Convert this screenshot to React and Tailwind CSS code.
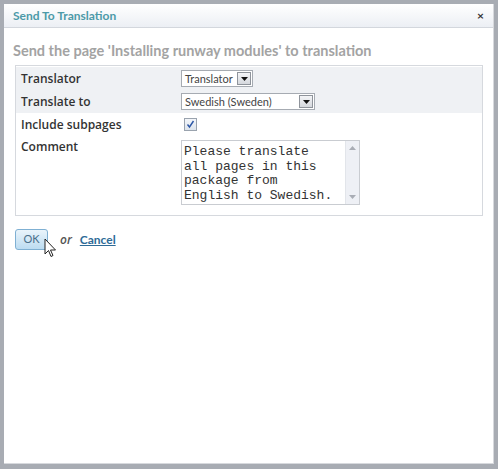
import React from "react";

const SANS = { fontFamily: 'Lato, "Open Sans", sans-serif' };
const LABEL = { fontFamily: '"Open Sans", Lato, sans-serif' };

function DropButton() {
  return (
    <span className="flex items-center justify-center w-[14px] h-[13px] border border-[#8f949b] bg-gradient-to-b from-[#f4f5f7] to-[#d5d8dd]">
      <svg width="7" height="4" viewBox="0 0 7 4">
        <path d="M0 0h7L3.5 4z" fill="#111" />
      </svg>
    </span>
  );
}

function Select({ value, width }) {
  return (
    <div
      className={`flex items-center justify-between h-[17px] border border-[#a6abb2] bg-white pl-[3px] pr-[1px] ${width}`}
    >
      <span className="text-[11px] text-[#444] leading-none">{value}</span>
      <DropButton />
    </div>
  );
}

function Row({ label, bg, align = "items-center", h = "h-[23px]", pt = "", children }) {
  return (
    <div className={`flex ${align} ${h} ${bg}`}>
      <div className={`w-[165px] pl-[5px] text-[12px] leading-[18px] font-semibold text-[#333] ${pt}`} style={LABEL}>
        {label}
      </div>
      <div className="flex-1">{children}</div>
    </div>
  );
}

export default function App() {
  return (
    <div className="w-[498px] h-[469px] bg-[#a8acb3] pt-[4px] pl-[4px] pr-[4px] pb-[5px]" style={SANS}>
      <div className="relative h-full bg-white border-r border-b border-[#d7d9dd] flex flex-col">
        <div className="flex items-center justify-between h-[24px] px-[9px] bg-gradient-to-b from-white to-[#eceff4] border-b border-[#d3d7dd]">
          <span className="text-[12px] font-bold text-[#4c9aa8]">Send To Translation</span>
          <span className="text-[12px] font-bold text-[#333] leading-none">×</span>
        </div>

        <div className="pl-[9px] pt-[14px] text-[14.5px] leading-[18px] font-bold text-[#a3a3a3]">
          Send the page 'Installing runway modules' to translation
        </div>

        <div className="ml-[11px] mr-[10px] mt-[5px] border border-[#d6d9de] pt-[1px] pb-[9px]">
          <Row label="Translator" bg="bg-[#eff1f4]">
            <Select value="Translator" width="w-[72px]" />
          </Row>
          <Row label="Translate to" bg="bg-[#eff1f4]">
            <Select value="Swedish (Sweden)" width="w-[134px]" />
          </Row>
          <Row label="Include subpages" bg="bg-white">
            <div className="ml-[3px] w-[13px] h-[13px] border border-[#9aa3ae] bg-gradient-to-b from-[#f3f6fa] to-[#dde4ec] flex items-center justify-center">
              <svg width="9" height="9" viewBox="0 0 9 9">
                <path d="M1.5 4.5l2 2.5 4-6" stroke="#2b56a6" strokeWidth="1.4" fill="none" />
              </svg>
            </div>
          </Row>
          <Row label="Comment" bg="bg-white" align="items-start" h="h-[70px]" pt="pt-[2px]">
            <div className="mt-[4px] flex w-[179px] h-[65px] border border-[#c9ccd1] bg-white">
              <div
                className="flex-1 pl-[2px] pt-[4px] text-[13px] leading-[14.5px] text-[#333]"
                style={{ fontFamily: '"Liberation Mono", monospace' }}
              >
                Please translate
                <br />
                all pages in this
                <br />
                package from
                <br />
                English to Swedish.
              </div>
              <div className="w-[14px] bg-[#eef0f5] border-l border-[#e2e5ea] flex flex-col justify-between items-center py-[5px]">
                <svg width="7" height="4" viewBox="0 0 7 4">
                  <path d="M0 4h7L3.5 0z" fill="#a9adb5" />
                </svg>
                <svg width="7" height="4" viewBox="0 0 7 4">
                  <path d="M0 0h7L3.5 4z" fill="#a9adb5" />
                </svg>
              </div>
            </div>
          </Row>
        </div>

        <div className="flex items-center ml-[11px] mt-[13px]">
          <button className="relative w-[33px] h-[21px] rounded-[3px] border border-[#7fb0d3] bg-gradient-to-b from-[#eaf4fb] to-[#bcdcf1] text-[11px] text-[#4a6f8a]">
            OK
            <svg className="absolute left-[28px] top-[8px]" width="13" height="21" viewBox="0 0 13 21">
              <path
                d="M1 1v15l3.5-3.5 2.5 6 2-1-2.5-5.5h5z"
                fill="white"
                stroke="#222"
                strokeWidth="1"
                strokeLinejoin="round"
              />
            </svg>
          </button>
          <span className="ml-[12px] text-[12px] italic font-semibold text-[#555]" style={LABEL}>
            or
          </span>
          <a className="ml-[8px] text-[12px] font-bold text-[#2e6b97] underline">Cancel</a>
        </div>
      </div>
    </div>
  );
}
